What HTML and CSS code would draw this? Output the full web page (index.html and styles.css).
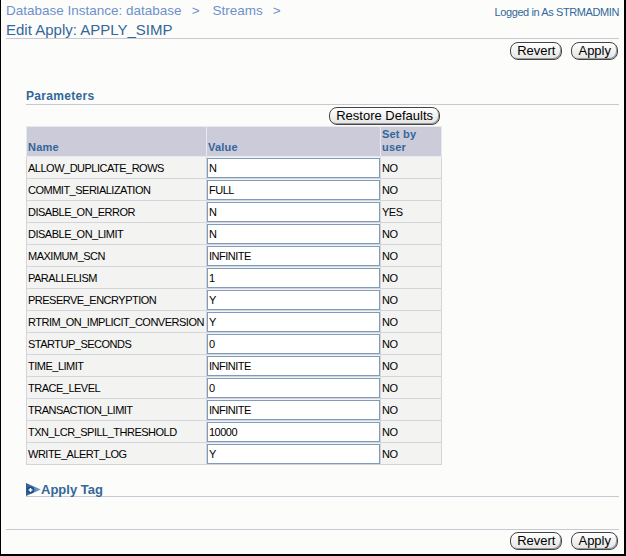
FILE: index.html
```html
<!DOCTYPE html>
<html>
<head>
<meta charset="utf-8">
<link rel="stylesheet" href="styles.css">
</head>
<body>
<div class="page">
  <div class="topbar">
    <div class="crumbs"><span>Database Instance: database</span><span class="sep">&gt;</span><span>Streams</span><span class="sep">&gt;</span></div>
    <div class="login">Logged in As STRMADMIN</div>
  </div>
  <h1 class="title">Edit Apply: APPLY_SIMP</h1>
  <div class="btnrow">
    <button class="btn">Revert</button>
    <button class="btn">Apply</button>
  </div>
  <div class="content">
    <h2 class="section">Parameters</h2>
    <div class="tablewrap">
      <div class="restore"><button class="btn">Restore Defaults</button></div>
      <table class="params">
        <colgroup><col class="c-name"><col class="c-val"><col class="c-set"></colgroup>
        <thead>
          <tr><th>Name</th><th>Value</th><th>Set by user</th></tr>
        </thead>
        <tbody>
          <tr><td>ALLOW_DUPLICATE_ROWS</td><td><input class="field" value="N"></td><td>NO</td></tr>
          <tr><td>COMMIT_SERIALIZATION</td><td><input class="field" value="FULL"></td><td>NO</td></tr>
          <tr><td>DISABLE_ON_ERROR</td><td><input class="field" value="N"></td><td>YES</td></tr>
          <tr><td>DISABLE_ON_LIMIT</td><td><input class="field" value="N"></td><td>NO</td></tr>
          <tr><td>MAXIMUM_SCN</td><td><input class="field" value="INFINITE"></td><td>NO</td></tr>
          <tr><td>PARALLELISM</td><td><input class="field" value="1"></td><td>NO</td></tr>
          <tr><td>PRESERVE_ENCRYPTION</td><td><input class="field" value="Y"></td><td>NO</td></tr>
          <tr><td>RTRIM_ON_IMPLICIT_CONVERSION</td><td><input class="field" value="Y"></td><td>NO</td></tr>
          <tr><td>STARTUP_SECONDS</td><td><input class="field" value="0"></td><td>NO</td></tr>
          <tr><td>TIME_LIMIT</td><td><input class="field" value="INFINITE"></td><td>NO</td></tr>
          <tr><td>TRACE_LEVEL</td><td><input class="field" value="0"></td><td>NO</td></tr>
          <tr><td>TRANSACTION_LIMIT</td><td><input class="field" value="INFINITE"></td><td>NO</td></tr>
          <tr><td>TXN_LCR_SPILL_THRESHOLD</td><td><input class="field" value="10000"></td><td>NO</td></tr>
          <tr><td>WRITE_ALERT_LOG</td><td><input class="field" value="Y"></td><td>NO</td></tr>
        </tbody>
      </table>
    </div>
    <h2 class="section tag">
      <svg class="tagicon" width="15" height="13" viewBox="0 0 15 13">
        <defs>
          <linearGradient id="g" x1="0" y1="0" x2="1" y2="0">
            <stop offset="0" stop-color="#2d5a96"/>
            <stop offset="1" stop-color="#7fa4d6"/>
          </linearGradient>
        </defs>
        <polygon points="0,0 15,6.5 0,13" fill="url(#g)"/>
        <circle cx="4.5" cy="7" r="3.6" fill="#1f4b85"/>
        <rect x="2.5" y="6.3" width="4" height="1.4" fill="#fff"/>
        <rect x="3.8" y="5" width="1.4" height="4" fill="#fff"/>
      </svg>Apply Tag
    </h2>
  </div>
  <div class="footer">
    <button class="btn">Revert</button>
    <button class="btn">Apply</button>
  </div>
</div>
</body>
</html>
```

FILE: styles.css
```css
html, body {
  margin: 0;
  padding: 0;
}
body {
  font-family: "Liberation Sans", Arial, sans-serif;
  background: #fcfdfb;
}
.page {
  width: 626px;
  height: 556px;
  box-sizing: border-box;
  border-left: 1px solid #000;
  border-right: 2px solid #000;
  border-bottom: 2px solid #000;
  background: #fcfdfb;
  padding: 0 5px;
  display: flex;
  flex-direction: column;
}
.topbar {
  display: flex;
  justify-content: space-between;
  align-items: flex-start;
  height: 20px;
  padding-top: 3px;
  box-sizing: border-box;
}
.crumbs {
  font-size: 13.5px;
  color: #6e90cc;
  line-height: 16px;
}
.crumbs .sep {
  margin: 0 13px 0 10px;
}
.login {
  font-size: 11px;
  color: #336699;
  line-height: 16px;
  padding-top: 1px;
  letter-spacing: -0.4px;
}
.title {
  margin: 0;
  font-size: 15px;
  font-weight: normal;
  color: #336699;
  line-height: 17px;
  padding-top: 1px;
  border-bottom: 1px solid #c8c8d4;
  padding-bottom: 0;
}
.btnrow {
  display: flex;
  justify-content: flex-end;
  gap: 9px;
  padding-top: 3px;
  padding-right: 1px;
}
.btn {
  font-family: "Liberation Sans", Arial, sans-serif;
  font-size: 13px;
  color: #000;
  height: 18px;
  line-height: 14px;
  padding: 0 6px;
  border: 1px solid #444;
  border-radius: 8px;
  background: linear-gradient(#ffffff, #e4e4e4);
  box-shadow: inset -1px -1px 0 #9a9a9a;
  cursor: default;
}
.content {
  padding-left: 20px;
  padding-top: 29px;
  flex: 1;
}
.section {
  margin: 0;
  font-size: 12px;
  font-weight: bold;
  color: #336699;
  line-height: 15px;
  letter-spacing: 0.3px;
  border-bottom: 1px solid #c8c8d4;
}
.tablewrap {
  width: 415px;
}
.restore {
  display: flex;
  justify-content: flex-end;
  padding-top: 2px;
  padding-right: 1px;
}
.params {
  border-collapse: collapse;
  table-layout: fixed;
  width: 415px;
  font-size: 11px;
  margin-top: 1px;
}
.params .c-name { width: 180px; }
.params .c-val { width: 174px; }
.params .c-set { width: 61px; }
.params th {
  background: #cccbd9;
  color: #336699;
  font-weight: bold;
  text-align: left;
  vertical-align: bottom;
  padding: 1px 1px 2px 1px;
  border: 1px solid #e8e8ee;
  line-height: 13px;
  height: 25px;
  box-sizing: border-box;
  letter-spacing: 0.2px;
}
.params td {
  background: #f3f3f1;
  border: 1px solid #d4d4dc;
  padding: 0 0 0 1px;
  height: 21px;
  letter-spacing: -0.5px;
  white-space: nowrap;
  overflow: hidden;
  color: #000;
}
.params td:nth-child(2) {
  padding: 0;
}
.field {
  display: block;
  width: 100%;
  box-sizing: border-box;
  height: 20px;
  border: 1px solid #7f9db9;
  background: #fff;
  font-family: "Liberation Sans", Arial, sans-serif;
  font-size: 11px;
  letter-spacing: -0.5px;
  padding: 0 1px;
  margin: 0;
  color: #000;
}
.tag {
  margin-top: 18px;
  font-size: 13px;
  display: flex;
  align-items: center;
  line-height: 13px;
  letter-spacing: 0;
}
.footer {
  border-top: 1px solid #c8c8d4;
  display: flex;
  justify-content: flex-end;
  gap: 9px;
  padding-top: 2px;
  padding-right: 1px;
  height: 25px;
  box-sizing: border-box;
}
```
